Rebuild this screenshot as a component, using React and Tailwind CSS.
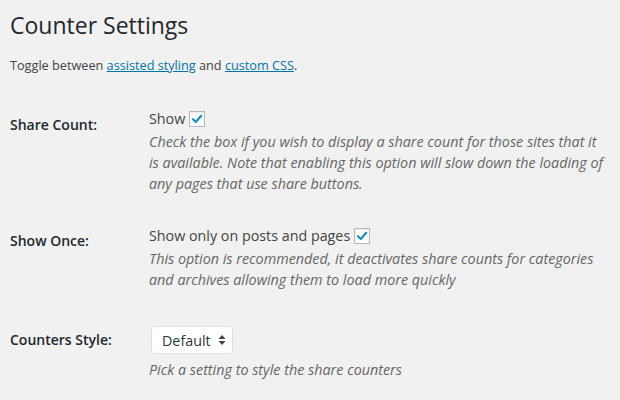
import React from 'react'

const Check = () => (
    <span className="inline-flex items-center justify-center w-4 h-4 border border-[#b4b9be] bg-white ml-[4px] align-middle shadow-[inset_0_1px_2px_rgba(0,0,0,0.1)]">
        <svg width="12" height="12" viewBox="0 0 12 12">
            <path d="M2 6.2 L4.8 9 L10.2 2.8" fill="none" stroke="#1e8cbe" strokeWidth="2.2" strokeLinecap="round" strokeLinejoin="round" />
        </svg>
    </span>
)

const App = () => {
    return (
        <div className="w-[620px] h-[400px] bg-[#f1f1f1] text-[#444] overflow-hidden px-[10px] font-['Open_Sans',sans-serif]">
            <h2 className="text-[23px] leading-[29px] text-[#23282d] pt-[11px]">Counter Settings</h2>

            <p className="text-[12.7px] leading-[20px] mt-[15px]">
                Toggle between <a href="#" className="text-[#0073aa] underline">assisted styling</a> and{' '}
                <a href="#" className="text-[#0073aa] underline">custom CSS</a>.
            </p>

            {/* Share Count */}
            <div className="flex mt-[33px]">
                <div className="w-[139px] shrink-0 pt-[7px] text-[14px] leading-[20px] font-semibold text-[#23282d]">Share Count:</div>
                <div className="w-[458px] text-[14.3px] leading-[21px]">
                    <div className="flex items-center">Show <Check /></div>
                    <p className="italic text-[#666] text-[14.35px] mt-[2px]">
                        Check the box if you wish to display a share count for those sites that it is available. Note that enabling this option will slow down the loading of any pages that use share buttons.
                    </p>
                </div>
            </div>

            {/* Show Once */}
            <div className="flex mt-[31px]">
                <div className="w-[139px] shrink-0 pt-[6px] text-[14px] leading-[20px] font-semibold text-[#23282d]">Show Once:</div>
                <div className="w-[458px] text-[14.3px] leading-[21px]">
                    <div className="flex items-center">Show only on posts and pages <Check /></div>
                    <p className="italic text-[#666] text-[14.35px] mt-[2px]">
                        This option is recommended, it deactivates share counts for categories and archives allowing them to load more quickly
                    </p>
                </div>
            </div>

            {/* Counters Style */}
            <div className="flex mt-[36px]">
                <div className="w-[139px] shrink-0 pt-[4px] text-[14px] leading-[20px] font-semibold text-[#23282d]">Counters Style:</div>
                <div className="w-[458px] text-[14.3px] leading-[21px]">
                    <div className="ml-[2px] w-[82px] h-[28px] bg-white border border-[#ddd] rounded-[4px] flex items-center justify-between pl-[10px] pr-[6px] text-[#32373c]">
                        <span>Default</span>
                        <svg width="8" height="12" viewBox="0 0 8 12">
                            <path d="M4 1 L7.5 5 L0.5 5 Z" fill="#444" />
                            <path d="M4 11 L7.5 7 L0.5 7 Z" fill="#444" />
                        </svg>
                    </div>
                    <p className="italic text-[#666] text-[14.35px] mt-[5px]">Pick a setting to style the share counters</p>
                </div>
            </div>
        </div>
    )
}

export default App
